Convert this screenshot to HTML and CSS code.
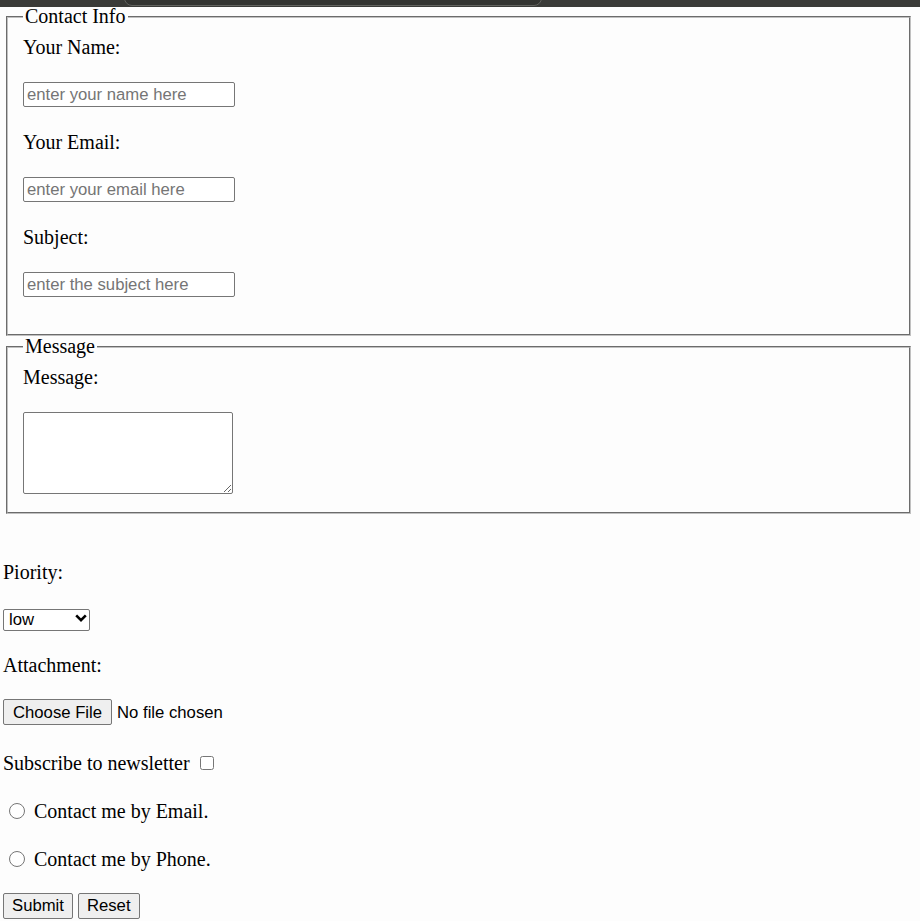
FILE: index.html
```html
<!DOCTYPE html>
<html>

<head>
    <meta charset="utf-8">
    <title>Contact form</title>
    <link rel="stylesheet" href="styles.css">
</head>

<body>
    <div class="browser-strip">
        <div class="url-pill"></div>
    </div>
    <form class="contact-form">
        <fieldset class="group">
            <legend>Contact Info</legend>
            <label for="name">Your Name:</label>
            <input class="text-field" type="text" id="name" name="name" placeholder="enter your name here">
            <label for="email">Your Email:</label>
            <input class="text-field" type="email" id="email" name="email" placeholder="enter your email here">
            <label for="subject">Subject:</label>
            <input class="text-field" type="text" id="subject" name="subject" placeholder="enter the subject here">
        </fieldset>
        <fieldset class="group group-message">
            <legend>Message</legend>
            <label for="message">Message:</label>
            <textarea id="message" name="message"></textarea>
        </fieldset>
        <div class="extras">
            <label for="priority">Piority:</label>
            <div class="select-wrap">
                <select id="priority" name="priority">
                    <option>low</option>
                    <option>medium</option>
                    <option>high</option>
                </select>
                <svg class="chevron" width="12" height="8" viewBox="0 0 12 8">
                    <path d="M1.2 1.3 L6 6.1 L10.8 1.3" fill="none" stroke="#000" stroke-width="2.6" />
                </svg>
            </div>
            <label class="attach-label" for="attachment">Attachment:</label>
            <input class="file-field" type="file" id="attachment" name="attachment">
            <div class="check-row">
                <label for="subscribe">Subscribe to newsletter</label>
                <input type="checkbox" id="subscribe" name="subscribe">
            </div>
            <div class="radio-row">
                <input type="radio" id="by-email" name="contact" value="email">
                <label for="by-email">Contact me by Email.</label>
            </div>
            <div class="radio-row">
                <input type="radio" id="by-phone" name="contact" value="phone">
                <label for="by-phone">Contact me by Phone.</label>
            </div>
            <div class="actions">
                <input type="submit" value="Submit">
                <input type="reset" value="Reset">
            </div>
        </div>
    </form>
</body>

</html>
```

FILE: styles.css
```css
* {
    box-sizing: border-box;
}

body {
    margin: 0;
    background-color: #fdfdfd;
    color: #000;
    font-family: "Liberation Serif", "Times New Roman", serif;
    font-size: 20px;
    line-height: 22px;
    overflow: hidden;
}

/* strip of the browser window left at the top of the shot */
.browser-strip {
    position: absolute;
    top: 0;
    left: 0;
    right: 0;
    height: 7px;
    background: #3a3b38;
    overflow: hidden;
}

.url-pill {
    margin-left: 124px;
    margin-top: -10px;
    width: 418px;
    height: 16px;
    border: 1px solid #62635f;
    border-radius: 8px;
    background: #333431;
}

.contact-form {
    padding: 6px 7px 0 3px;
}

.group {
    display: flex;
    flex-direction: column;
    align-items: flex-start;
    gap: 24px;
    margin: 0 2px 0 3px;
    padding: 9px 15px 37px;
    border: 2px groove #c0c0c0;
    min-width: 0;
}

.group-message {
    margin-top: 0;
    padding-bottom: 18px;
}

legend {
    padding: 0 2px;
    line-height: 21px;
}

label {
    display: block;
}

.text-field,
textarea,
select,
.file-field,
.actions input {
    font-family: "Liberation Sans", Arial, sans-serif;
    font-size: 16.7px;
    color: #000;
}

.text-field {
    width: 212px;
    height: 25px;
    padding: 1px 3px;
    border: 1px solid #767676;
    border-radius: 2px;
    background: #fff;
}

.text-field::placeholder {
    color: #757575;
}

textarea {
    width: 210px;
    height: 82px;
    padding: 2px;
    border: 1px solid #767676;
    border-radius: 2px;
    background: #fff;
}

.extras {
    display: flex;
    flex-direction: column;
    align-items: flex-start;
    gap: 24px;
    padding-top: 47px;
}

.select-wrap {
    position: relative;
    height: 22px;
}

select {
    appearance: none;
    width: 87px;
    height: 22px;
    padding: 0 5px;
    border: 1px solid #767676;
    border-radius: 2px;
    background: #fff;
}

.chevron {
    position: absolute;
    top: 7px;
    left: 72px;
    pointer-events: none;
}

.attach-label {
    margin-top: 1px;
}

.file-field {
    height: 26px;
    margin-top: -1px;
    line-height: 26px;
}

.file-field::file-selector-button {
    height: 26px;
    margin: 0 5px 0 0;
    padding: 0 9px;
    font: inherit;
    border: 1px solid #767676;
    border-radius: 2px;
    background: #efefef;
    color: #000;
}

.check-row {
    margin-top: 3px;
}

.check-row label,
.radio-row label {
    display: inline;
}

.check-row input {
    width: 14px;
    height: 14px;
    margin: 3px 3px 3px 5px;
    vertical-align: baseline;
}

.radio-row {
    height: 22px;
    margin-top: 2px;
}

.radio-row input {
    width: 16px;
    height: 16px;
    margin: 0 4px 0 6px;
    vertical-align: -1px;
}

.actions {
    display: flex;
    gap: 5px;
    margin-top: -1px;
}

.actions input {
    height: 26px;
    padding: 0 8px;
    border: 1px solid #767676;
    border-radius: 2px;
    background: #efefef;
}
```
